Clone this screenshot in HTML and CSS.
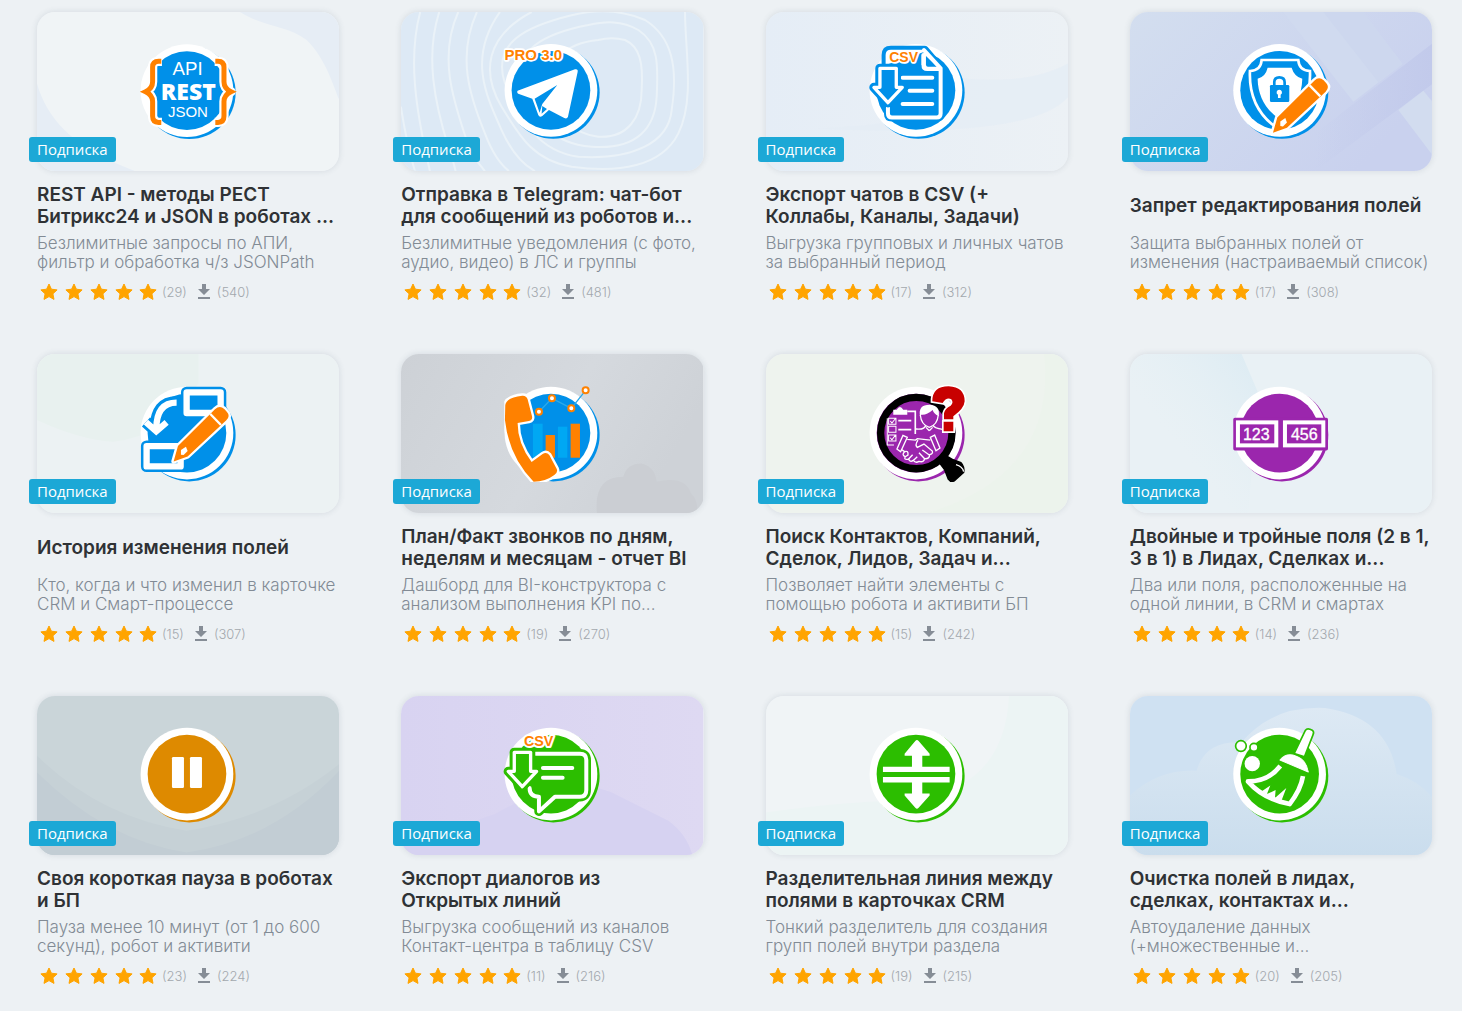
FILE: index.html
```
<!DOCTYPE html>
<html lang="ru">
<head>
  <meta charset="UTF-8">
  <meta name="viewport" content="width=device-width, initial-scale=1.0">
  <title>Каталог приложений</title>
  <link rel="stylesheet" href="styles.css">
</head>
<body>
  <!-- shared shapes -->
  <svg class="sprite" aria-hidden="true">
    <defs>
      <g id="disc">
        <circle cx="7" cy="6" r="139" fill="currentColor"/>
        <circle r="139" fill="#fff"/>
        <circle r="118" fill="currentColor"/>
      </g>
      <g id="pencil">
        <path d="M474 398L487 352L598 242Q612 228 626 241L634 250Q645 262 632 275L516 383Z" fill="#ff8100" stroke="#fff" stroke-width="14" stroke-linejoin="round" paint-order="stroke"/>
        <path d="M584 256L616 289" stroke="#fff" stroke-width="7"/>
        <path d="M496 364L511 354L516 367L504 379L496 378Z" fill="#fff"/>
      </g>
      <g id="arrow" stroke-linejoin="round">
        <path d="M388 205H437V262H455L412 308L370 262H388Z" fill="currentColor" stroke="currentColor" stroke-width="28"/>
        <path d="M388 205H437V262H455L412 308L370 262H388Z" fill="currentColor" stroke="#fff" stroke-width="10"/>
      </g>
      <path id="star" d="M12 1L14.4 6.2L20.1 6.9L15.9 10.8L17 16.4L12 13.6L7 16.4L8.1 10.8L3.9 6.9L9.6 6.2Z"/>
      <symbol id="stars" viewBox="0 0 125 18">
        <use href="#star"/>
        <use href="#star" x="25"/>
        <use href="#star" x="50"/>
        <use href="#star" x="75"/>
        <use href="#star" x="99"/>
      </symbol>
      <symbol id="download" viewBox="0 0 12 16">
        <path d="M4 0H8V5H12L6 11L0 5H4ZM0 13H12V15H0Z"/>
      </symbol>
    </defs>
  </svg>

  <main class="catalog">
    <article class="card">
      <a class="cover" href="#" aria-label="REST API">
        <svg class="picture blue" viewBox="51 36 907 477" preserveAspectRatio="xMidYMid slice">
          <rect x="51" y="36" width="907" height="477" fill="#f0f4f6"/>
          <path d="M660 36C740 85 800 75 860 120C920 180 940 260 958 300V36Z" fill="#e6edf5"/>
          <path d="M51 250C80 350 150 440 345 513H51Z" fill="#e6edf5"/>
          <use href="#disc" x="501" y="272"/>
          <g fill="none" stroke="#fff" stroke-width="28" stroke-linejoin="round">
            <path d="M426 184H416Q398 184 398 202V245Q398 265 377 275Q398 285 398 304V348Q398 367 416 367H426"/>
            <path d="M584 184H594Q612 184 612 202V245Q612 265 633 275Q612 285 612 304V348Q612 367 594 367H584"/>
          </g>
          <g fill="none" stroke="#ff8100" stroke-width="15">
            <path d="M424 184H416Q398 184 398 202V245Q398 265 377 275Q398 285 398 304V348Q398 367 416 367H424"/>
            <path d="M586 184H594Q612 184 612 202V245Q612 265 633 275Q612 285 612 304V348Q612 367 594 367H586"/>
          </g>
          <text class="arial" x="503" y="225" font-size="56">API</text>
          <text class="opensans" x="505" y="299" font-size="69">REST</text>
          <text class="arial" x="504" y="350" font-size="45">JSON</text>
        </svg>
        <span class="badge">Подписка</span>
      </a>
      <h3 class="title"><a href="#">REST API - методы РЕСТ<br>Битрикс24 и JSON в роботах ...</a></h3>
      <p class="text">Безлимитные запросы по АПИ,<br>фильтр и обработка ч/з JSONPath</p>
      <div class="stats"><svg class="stars"><use href="#stars"/></svg><span>(29)</span><svg class="download"><use href="#download"/></svg><span>(540)</span></div>
    </article>

    <article class="card">
      <a class="cover" href="#" aria-label="Telegram">
        <svg class="picture blue" viewBox="48 36 907 477" preserveAspectRatio="xMidYMid slice">
          <rect x="48" y="36" width="907" height="477" fill="#dde9f5"/>
          <g fill="none" stroke="#eaf2f8" stroke-width="6">
            <path d="M48 320Q65 430 90 513"/>
            <path d="M106 36C70 170 90 320 135 513"/>
            <path d="M163 36C120 170 150 310 190 440Q205 480 212 513"/>
            <path d="M220 36C160 170 205 300 245 420Q262 470 300 513"/>
            <path d="M276 36C215 170 255 290 300 400Q330 480 372 513"/>
            <path d="M345 36C250 170 300 280 350 390Q390 480 450 513"/>
            <path d="M440 36C300 110 290 220 350 320C400 400 440 480 560 500C700 520 830 500 880 400C930 300 900 150 900 36"/>
            <path d="M560 46C420 80 320 130 360 250C400 330 440 450 580 470C740 480 850 430 860 330C880 200 860 110 780 60C710 30 640 26 560 46Z"/>
            <path d="M610 75C480 100 380 150 410 260C450 350 490 430 620 440C760 450 810 380 815 290C820 190 820 130 760 90C710 60 660 64 610 75Z"/>
            <path d="M640 120C540 130 490 180 500 270C520 350 560 400 640 410C730 415 770 350 770 270C775 190 765 140 720 120Q680 110 640 120Z"/>
          </g>
          <use href="#disc" x="498" y="271"/>
          <path d="M398 272L570 208Q580 206 578 216L549 350Q546 358 538 354L492 330L472 348Q464 354 460 345L442 296L402 282Q394 278 398 272Z" fill="#fff"/>
          <path d="M449 296L517 255L472 312L464 338ZM472 318L486 327L470 341Z" fill="currentColor"/>
          <text class="arial bold" x="445" y="179" font-size="45" stroke="#fff" stroke-width="10">PRO 3.0</text>
        </svg>
        <span class="badge">Подписка</span>
      </a>
      <h3 class="title"><a href="#">Отправка в Telegram: чат-бот<br>для сообщений из роботов и...</a></h3>
      <p class="text">Безлимитные уведомления (с фото,<br>аудио, видео) в ЛС и группы</p>
      <div class="stats"><svg class="stars"><use href="#stars"/></svg><span>(32)</span><svg class="download"><use href="#download"/></svg><span>(481)</span></div>
    </article>

    <article class="card">
      <a class="cover" href="#" aria-label="Экспорт чатов">
        <svg class="picture blue" viewBox="46 36 907 477" preserveAspectRatio="xMidYMid slice">
          <defs>
            <linearGradient id="g3" x1="0" y1="0" x2="1" y2="0"><stop offset="0" stop-color="#e5edf6"/><stop offset="1" stop-color="#ecf1f5"/></linearGradient>
          </defs>
          <rect x="46" y="36" width="907" height="477" fill="url(#g3)"/>
          <path d="M953 190C860 240 760 245 620 235C700 300 560 370 200 385C500 400 860 400 953 290Z" fill="#e4ecf5" opacity=".7"/>
          <use href="#disc" x="496" y="271"/>
          <g stroke-linejoin="round" stroke-linecap="round">
            <path d="M405 200V165Q405 149 421 149H522L570 205V340Q570 352 558 352H424Q412 352 412 340V325" fill="currentColor" stroke="currentColor" stroke-width="24"/>
            <path d="M405 195V165Q405 149 421 149H519L518 195Q518 207 530 207H568L522 155" fill="#fff"/>
            <path d="M526 168L560 200H532Q526 200 526 194Z" fill="currentColor"/>
            <path d="M520 150L570 205V340Q570 352 558 352H424Q412 352 412 340V322M518 165V195Q518 207 530 207H566M456 233H545M477 272H545M456 312H545" fill="none" stroke="#fff" stroke-width="12"/>
          </g>
          <path d="M408 195H512V215H408Z" fill="currentColor"/>
          <use href="#arrow"/>
          <text class="arial bold" x="459" y="187" font-size="42" stroke="#fff" stroke-width="10">CSV</text>
        </svg>
        <span class="badge">Подписка</span>
      </a>
      <h3 class="title"><a href="#">Экспорт чатов в CSV (+<br>Коллабы, Каналы, Задачи)</a></h3>
      <p class="text">Выгрузка групповых и личных чатов<br>за выбранный период</p>
      <div class="stats"><svg class="stars"><use href="#stars"/></svg><span>(17)</span><svg class="download"><use href="#download"/></svg><span>(312)</span></div>
    </article>

    <article class="card">
      <a class="cover" href="#" aria-label="Запрет редактирования">
        <svg class="picture blue" viewBox="45 36 907 477" preserveAspectRatio="xMidYMid slice">
          <defs>
            <linearGradient id="g4" x1="0" y1="0" x2="1" y2=".5"><stop offset="0" stop-color="#d3deef"/><stop offset="1" stop-color="#c9d1ee"/></linearGradient>
            <linearGradient id="g4band"><stop offset="0" stop-color="#c2caeb" stop-opacity="0"/><stop offset="1" stop-color="#c2caeb"/></linearGradient>
          </defs>
          <rect x="45" y="36" width="907" height="477" fill="url(#g4)"/>
          <path d="M505 36H745L862 192L715 305Z" fill="#d0daef"/>
          <path d="M625 36H745L862 192L790 247Z" fill="#cdd7ee"/>
          <path d="M952 130L600 400V513L952 252Z" fill="url(#g4band)"/>
          <path d="M850 330L925 272L952 305V465Z" fill="#d2dcef"/>
          <use href="#disc" x="494" y="271"/>
          <path d="M440 180H550Q552 212 585 213Q590 330 495 390Q400 330 405 213Q438 212 440 180Z" fill="currentColor" stroke="#fff" stroke-width="8"/>
          <path d="M458 203H530Q538 230 562 236Q560 315 495 358Q430 315 428 236Q452 230 458 203Z" fill="#fff"/>
          <path d="M478 258V247Q478 232 493 232Q509 232 509 247V258" fill="none" stroke="currentColor" stroke-width="8"/>
          <rect x="465" y="255" width="58" height="51" rx="4" fill="currentColor"/>
          <path d="M493 269A8 8 0 0 1 497 284V294H489V284A8 8 0 0 1 493 269Z" fill="#fff"/>
          <use href="#pencil"/>
        </svg>
        <span class="badge">Подписка</span>
      </a>
      <h3 class="title"><a href="#">Запрет редактирования полей</a></h3>
      <p class="text">Защита выбранных полей от<br>изменения (настраиваемый список)</p>
      <div class="stats"><svg class="stars"><use href="#stars"/></svg><span>(17)</span><svg class="download"><use href="#download"/></svg><span>(308)</span></div>
    </article>

    <article class="card">
      <a class="cover" href="#" aria-label="История изменения">
        <svg class="picture blue" viewBox="51 42 907 477" preserveAspectRatio="xMidYMid slice">
          <rect x="51" y="42" width="907" height="477" fill="#ecf2f3"/>
          <path d="M51 42H535V130Q440 290 280 305Q180 300 51 240Z" fill="#e8f1ef"/>
          <use href="#disc" x="501" y="279"/>
          <g fill="currentColor" stroke="currentColor" stroke-linejoin="round">
            <rect x="500" y="157" width="102" height="62" stroke-width="34"/>
            <rect x="380" y="318" width="102" height="61" stroke-width="34"/>
            <path d="M470 187Q408 187 408 262M378 246L409 274L440 247" fill="none" stroke-width="36"/>
          </g>
          <g fill="none" stroke="#fff" stroke-width="19">
            <rect x="500" y="157" width="102" height="62" stroke-linejoin="round"/>
            <rect x="380" y="318" width="102" height="61" stroke-linejoin="round"/>
            <path d="M470 188Q409 188 409 268M378 246L409 274L440 247"/>
          </g>
          <use href="#pencil" x="-13" y="-34"/>
        </svg>
        <span class="badge">Подписка</span>
      </a>
      <h3 class="title"><a href="#">История изменения полей</a></h3>
      <p class="text">Кто, когда и что изменил в карточке<br>CRM и Смарт-процессе</p>
      <div class="stats"><svg class="stars"><use href="#stars"/></svg><span>(15)</span><svg class="download"><use href="#download"/></svg><span>(307)</span></div>
    </article>

    <article class="card">
      <a class="cover" href="#" aria-label="План/Факт звонков">
        <svg class="picture blue" viewBox="48 42 907 477" preserveAspectRatio="xMidYMid slice">
          <defs>
            <linearGradient id="g6" x1="0" y1="0" x2="1" y2=".3"><stop offset="0" stop-color="#cdd1d6"/><stop offset=".6" stop-color="#d5d9de"/><stop offset="1" stop-color="#ced2d7"/></linearGradient>
            <clipPath id="phone"><rect x="358" y="140" width="290" height="286"/></clipPath>
          </defs>
          <rect x="48" y="42" width="907" height="477" fill="url(#g6)"/>
          <path d="M636 519Q625 410 715 410Q725 370 770 370Q810 380 815 425Q900 405 918 460Q940 480 936 519Z" fill="#cbced3"/>
          <use href="#disc" x="498" y="279"/>
          <g fill="#00a8f3">
            <rect x="444" y="251" width="29" height="102"/>
            <rect x="519" y="260" width="28" height="93"/>
          </g>
          <g fill="#ff8100">
            <rect x="482" y="285" width="28" height="68"/>
            <rect x="557" y="251" width="28" height="102"/>
          </g>
          <path d="M462 215L501 175L559 205L602 151" fill="none" stroke="#2aa9e8" stroke-width="4"/>
          <g fill="#fff" stroke="#ff8100" stroke-width="6">
            <circle cx="462" cy="215" r="9"/>
            <circle cx="501" cy="175" r="9"/>
            <circle cx="559" cy="205" r="9"/>
            <circle cx="602" cy="151" r="9"/>
          </g>
          <path clip-path="url(#phone)" d="M361 195Q365 172 412 167Q424 166 428 178L441 228Q444 240 432 243L398 249Q398 310 440 366L473 342Q484 334 493 345L515 386Q520 397 508 405Q482 425 446 425Q372 350 360 240Z" fill="#ff8100" stroke="#fff" stroke-width="14" stroke-linejoin="round" paint-order="stroke"/>
        </svg>
        <span class="badge">Подписка</span>
      </a>
      <h3 class="title"><a href="#">План/Факт звонков по дням,<br>неделям и месяцам - отчет BI</a></h3>
      <p class="text">Дашборд для BI-конструктора с<br>анализом выполнения KPI по...</p>
      <div class="stats"><svg class="stars"><use href="#stars"/></svg><span>(19)</span><svg class="download"><use href="#download"/></svg><span>(270)</span></div>
    </article>

    <article class="card">
      <a class="cover" href="#" aria-label="Поиск">
        <svg class="picture purple" viewBox="46 42 907 477" preserveAspectRatio="xMidYMid slice">
          <rect x="46" y="42" width="907" height="477" fill="#eef3ee"/>
          <path d="M880 42H953V519H530Q920 400 880 42Z" fill="#ecf3ec"/>
          <use href="#disc" x="496" y="279"/>
          <circle cx="497" cy="279" r="107" fill="none" stroke="#000" stroke-width="22"/>
          <path d="M562 366L586 344L606 356L632 366Q645 380 641 398L612 424Q600 430 591 418L580 390Z"/>
          <path d="M616 374Q636 380 639 395" fill="none" stroke="#fff" stroke-width="4"/>
          <g fill="none" stroke="#fff" stroke-width="4">
            <path d="M414 235H436V253H414ZM414 259H436V277H414ZM414 285H436V303H414ZM410 235V315H430M419 243L424 249L434 236M419 293L424 299L434 286" stroke-width="3"/>
            <path d="M443 242H482M443 269H482M470 214H494V282" stroke-width="5"/>
            <path d="M496 267Q522 270 526 255M547 255Q550 265 576 268M509 225Q512 255 536 262Q560 255 563 225"/>
            <path d="M536 272L526 262M536 272L546 262"/>
            <path d="M457 286L470 292L450 335L439 327ZM552 285L539 292L556 332L568 324ZM470 298L495 300L500 296L539 300M452 328L462 335Q452 345 464 350Q458 360 474 357Q478 368 488 361Q495 370 505 364Q520 368 522 356Q537 357 537 344Q548 342 545 333L520 312L500 322Q492 315 502 300"/>
            <path d="M462 335Q474 330 472 345L464 350M474 357L486 344M488 361L500 350M515 330L536 345M505 338L522 356"/>
          </g>
          <path d="M428 224V209H438Q448 193 458 209H470V224Z" fill="#fff"/>
          <path d="M508 228Q502 194 537 194Q570 196 564 228Q550 222 546 210Q528 226 512 224Z" fill="#fff"/>
          <path d="M545 184Q545 139 594 139Q642 141 642 184Q641 205 608 229V238H580V220Q583 205 600 197Q610 188 602 178Q588 170 576 189ZM579 245H608V274H579Z" fill="#c80000" stroke="#fff" stroke-width="10" paint-order="stroke"/>
        </svg>
        <span class="badge">Подписка</span>
      </a>
      <h3 class="title"><a href="#">Поиск Контактов, Компаний,<br>Сделок, Лидов, Задач и...</a></h3>
      <p class="text">Позволяет найти элементы с<br>помощью робота и активити БП</p>
      <div class="stats"><svg class="stars"><use href="#stars"/></svg><span>(15)</span><svg class="download"><use href="#download"/></svg><span>(242)</span></div>
    </article>

    <article class="card">
      <a class="cover" href="#" aria-label="Двойные и тройные поля">
        <svg class="picture purple" viewBox="45 42 907 477" preserveAspectRatio="xMidYMid slice">
          <defs>
            <linearGradient id="g8" x1="0" y1="1" x2="1" y2="0"><stop offset=".4" stop-color="#e3eff4" stop-opacity="0"/><stop offset="1" stop-color="#dcebf3"/></linearGradient>
          </defs>
          <rect x="45" y="42" width="907" height="477" fill="#e9f1f5"/>
          <path d="M45 42H380L430 160L400 519H45Z" fill="url(#g8)"/>
          <use href="#disc" x="494" y="279"/>
          <rect x="360" y="238" width="274" height="88" fill="currentColor" stroke="currentColor" stroke-width="10" stroke-linejoin="round"/>
          <rect x="369" y="247" width="115" height="69" fill="none" stroke="#fff" stroke-width="12"/>
          <rect x="510" y="247" width="115" height="69" fill="none" stroke="#fff" stroke-width="12"/>
          <text class="arial" x="424" y="299" font-size="48" stroke="#fff">123</text>
          <text class="arial" x="568" y="299" font-size="48" stroke="#fff">456</text>
        </svg>
        <span class="badge">Подписка</span>
      </a>
      <h3 class="title"><a href="#">Двойные и тройные поля (2 в 1,<br>3 в 1) в Лидах, Сделках и...</a></h3>
      <p class="text">Два или поля, расположенные на<br>одной линии, в CRM и смартах</p>
      <div class="stats"><svg class="stars"><use href="#stars"/></svg><span>(14)</span><svg class="download"><use href="#download"/></svg><span>(236)</span></div>
    </article>

    <article class="card">
      <a class="cover" href="#" aria-label="Пауза">
        <svg class="picture amber" viewBox="51 36 907 477" preserveAspectRatio="xMidYMid slice">
          <rect x="51" y="36" width="907" height="477" fill="#cad5d9"/>
          <path d="M51 215Q240 400 500 440Q760 400 958 240V513H51Z" fill="#c6d1d6"/>
          <path d="M51 265Q260 470 500 505Q760 470 958 260V513H51Z" fill="#c2cdd4"/>
          <use href="#disc" x="501" y="270"/>
          <rect x="456" y="219" width="36" height="93" rx="4" fill="#fff"/>
          <rect x="510" y="219" width="36" height="93" rx="4" fill="#fff"/>
        </svg>
        <span class="badge">Подписка</span>
      </a>
      <h3 class="title"><a href="#">Своя короткая пауза в роботах<br>и БП</a></h3>
      <p class="text">Пауза менее 10 минут (от 1 до 600<br>секунд), робот и активити</p>
      <div class="stats"><svg class="stars"><use href="#stars"/></svg><span>(23)</span><svg class="download"><use href="#download"/></svg><span>(224)</span></div>
    </article>

    <article class="card">
      <a class="cover" href="#" aria-label="Экспорт диалогов">
        <svg class="picture green" viewBox="48 36 907 477" preserveAspectRatio="xMidYMid slice">
          <defs>
            <linearGradient id="g10"><stop offset="0" stop-color="#d8d3f1"/><stop offset="1" stop-color="#ded9f2"/></linearGradient>
          </defs>
          <rect x="48" y="36" width="907" height="477" fill="url(#g10)"/>
          <path d="M48 513V460Q200 440 330 390Q560 260 700 335L850 410Q905 450 922 513Z" fill="#d6d2f1"/>
          <use href="#disc" x="498" y="270"/>
          <g stroke-linejoin="round" stroke-linecap="round">
            <path d="M440 209H585Q604 209 604 228V318Q604 338 585 338H510L462 382V338Q434 338 434 308Z" fill="currentColor" stroke="currentColor" stroke-width="28"/>
            <path d="M452 209H585Q604 209 604 228V318Q604 338 585 338H510L462 382V338Q434 338 434 312M474 252H562M474 281H533" fill="none" stroke="#fff" stroke-width="12"/>
          </g>
          <use href="#arrow"/>
          <text class="arial bold" x="461" y="185" font-size="43" stroke="#fff" stroke-width="12">CSV</text>
        </svg>
        <span class="badge">Подписка</span>
      </a>
      <h3 class="title"><a href="#">Экспорт диалогов из<br>Открытых линий</a></h3>
      <p class="text">Выгрузка сообщений из каналов<br>Контакт-центра в таблицу CSV</p>
      <div class="stats"><svg class="stars"><use href="#stars"/></svg><span>(11)</span><svg class="download"><use href="#download"/></svg><span>(216)</span></div>
    </article>

    <article class="card">
      <a class="cover" href="#" aria-label="Разделительная линия">
        <svg class="picture green" viewBox="46 36 907 477" preserveAspectRatio="xMidYMid slice">
          <rect x="46" y="36" width="907" height="477" fill="#f0f4f6"/>
          <path d="M775 36H953V513H46V385Q300 350 450 350Q760 330 775 36Z" fill="#ecf4f4"/>
          <use href="#disc" x="496" y="270"/>
          <path d="M397 248H484V215H462V209L494 171Q499 165 504 171L537 209V215H515V248H597V264H397ZM397 279H597V295H515V328H537V334L504 371Q499 377 494 371L462 334V328H484V295H397Z" fill="#fff"/>
        </svg>
        <span class="badge">Подписка</span>
      </a>
      <h3 class="title"><a href="#">Разделительная линия между<br>полями в карточках CRM</a></h3>
      <p class="text">Тонкий разделитель для создания<br>групп полей внутри раздела</p>
      <div class="stats"><svg class="stars"><use href="#stars"/></svg><span>(19)</span><svg class="download"><use href="#download"/></svg><span>(215)</span></div>
    </article>

    <article class="card">
      <a class="cover" href="#" aria-label="Очистка полей">
        <svg class="picture green" viewBox="45 36 907 477" preserveAspectRatio="xMidYMid slice">
          <defs>
            <linearGradient id="g12" x1="0" y1="0" x2="0" y2="1"><stop offset="0" stop-color="#dde9f4"/><stop offset="1" stop-color="#cadded"/></linearGradient>
          </defs>
          <rect x="45" y="36" width="907" height="477" fill="#cfe1f2"/>
          <path d="M45 335Q130 255 245 260Q270 170 380 175Q470 65 630 72Q820 100 845 270Q910 290 952 340V513H45Z" fill="url(#g12)"/>
          <use href="#disc" x="494" y="270"/>
          <g fill="#fff" stroke="currentColor" stroke-width="5">
            <circle cx="378" cy="186" r="16"/>
            <circle cx="417" cy="190" r="12"/>
          </g>
          <circle cx="412" cy="239" r="23" fill="#fff"/>
          <path d="M573 141Q577 135 584 138L591 141Q595 144 592 151L567 215L541 207Z" fill="#fff" stroke="currentColor" stroke-width="10" paint-order="stroke" stroke-linejoin="round"/>
          <path d="M495 228Q515 205 542 216Q574 227 580 264Z" fill="#fff" stroke="#fff" stroke-width="3" stroke-linejoin="round"/>
          <path d="M496 246Q460 292 399 292Q445 345 524 360Q558 315 564 276" fill="none" stroke="#fff" stroke-width="14" stroke-linejoin="round"/>
          <path d="M435 325L466 304L456 330L482 318L480 342L514 312L498 354Z" fill="#fff"/>
        </svg>
        <span class="badge">Подписка</span>
      </a>
      <h3 class="title"><a href="#">Очистка полей в лидах,<br>сделках, контактах и...</a></h3>
      <p class="text">Автоудаление данных<br>(+множественные и...</p>
      <div class="stats"><svg class="stars"><use href="#stars"/></svg><span>(20)</span><svg class="download"><use href="#download"/></svg><span>(205)</span></div>
    </article>
  </main>
</body>
</html>
```
FILE: styles.css
```
* {
  box-sizing: border-box;
}
body {
  margin: 0;
  background-color: #edf1f4;
  font-family: Inter, "Open Sans", sans-serif;
}
.sprite {
  display: block;
  width: 0;
  height: 0;
}
.catalog {
  display: grid;
  grid-template-columns: repeat(4, minmax(0, 1fr));
  gap: 52px 62px;
  padding: 12px 30px 20px 37px;
}
.card {
  display: flex;
  flex-direction: column;
}
.cover {
  display: block;
  position: relative;
  aspect-ratio: 19 / 10;
}
.picture {
  display: block;
  width: 100%;
  height: 100%;
  border-radius: 18px;
  box-shadow: 0 0 6px rgba(60, 80, 100, 0.14);
}
.blue { color: #0090e9; }
.green { color: #2cbe00; }
.purple { color: #9b26ad; }
.amber { color: #de8a00; }

.picture text {
  text-anchor: middle;
}
.arial {
  font-family: "Liberation Sans", Arial, sans-serif;
  fill: #fff;
}
.arial.bold {
  font-weight: bold;
  fill: #ff8100;
  paint-order: stroke;
  stroke-linejoin: round;
}
.opensans {
  font-family: "Open Sans", sans-serif;
  font-weight: 800;
  fill: #fff;
}
.badge {
  position: absolute;
  left: -8px;
  bottom: 9px;
  padding: 0 8px;
  border-radius: 3px;
  background-color: #1ca8d6;
  color: white;
  font-family: "Open Sans", sans-serif;
  font-size: 15px;
  line-height: 25px;
}
.title {
  display: flex;
  align-items: center;
  min-height: 44px;
  margin: 13px 0 6px;
  font-size: 19px;
  font-weight: 600;
  line-height: 22px;
  white-space: nowrap;
}
.title a {
  color: #2f3235;
  text-decoration: none;
}
.text {
  margin: 0 0 10px;
  color: #828b95;
  font-size: 17px;
  font-weight: 300;
  line-height: 19px;
  white-space: nowrap;
}
.stats {
  display: flex;
  align-items: center;
  height: 20px;
  color: #a3a8ae;
  font-size: 13px;
  font-weight: 300;
}
.stars {
  width: 125px;
  height: 18px;
  fill: #ffa400;
  stroke: #ffa400;
  stroke-linejoin: round;
}
.download {
  width: 12px;
  height: 16px;
  margin: 0 7px 0 11px;
  fill: #868d96;
}
```
